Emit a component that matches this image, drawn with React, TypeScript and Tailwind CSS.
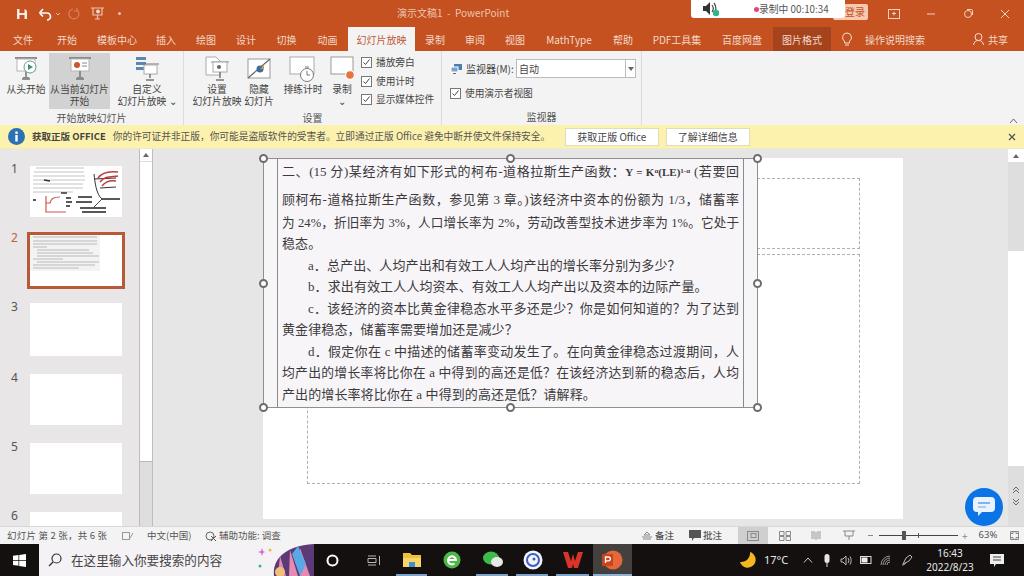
import React from "react";

const sansFont = "font-['Noto_Sans_CJK_SC','Noto_Sans',sans-serif]";

const tabs = [
  { t: "文件", c: "w-[46px]" },
  { t: "开始", c: "w-[42px]" },
  { t: "模板中心", c: "w-[58px]" },
  { t: "插入", c: "w-[40px]" },
  { t: "绘图", c: "w-[40px]" },
  { t: "设计", c: "w-[40px]" },
  { t: "切换", c: "w-[41px]" },
  { t: "动画", c: "w-[41px]" },
  { t: "幻灯片放映", c: "w-[67px] bg-[#f3f3f3] !text-[#c05a35]" },
  { t: "录制", c: "w-[40px]" },
  { t: "审阅", c: "w-[40px]" },
  { t: "视图", c: "w-[40px]" },
  { t: "MathType", c: "w-[68px]" },
  { t: "帮助", c: "w-[40px]" },
  { t: "PDF工具集", c: "w-[68px]" },
  { t: "百度网盘", c: "w-[62px]" },
  { t: "图片格式", c: "w-[58px] bg-[#a5431c]" },
];

function Screen({ children, bg = "#fff" }: { children?: React.ReactNode; bg?: string }) {
  return (
    <svg width="26" height="26" viewBox="0 0 26 26" fill="none">
      <rect x="2" y="1" width="22" height="2" fill="#8a8a8a" />
      <rect x="4" y="3" width="18" height="12" fill={bg} stroke="#b5b5b5" />
      <path d="M13 15v6M9 23h8" stroke="#777" strokeWidth="1.5" />
      <path d="M10 21h6l1 2H9z" fill="#8a8a8a" />
      {children}
    </svg>
  );
}

function RibbonBtn({ w, icon, lines, active }: { w: string; icon: React.ReactNode; lines: string[]; active?: boolean }) {
  return (
    <div className={`flex flex-col items-center h-[56px] shrink-0 ${w} ${active ? "bg-[#d2d2d2]" : ""}`}>
      <div className="h-[30px] flex items-start pt-[3px] justify-center">{icon}</div>
      {lines.map((l) => (
        <div key={l} className="text-[9.8px] leading-[12px] whitespace-nowrap text-[#444]">{l}</div>
      ))}
    </div>
  );
}

function Check({ label }: { label: string }) {
  return (
    <div className="flex items-center h-[19px] gap-[3px] whitespace-nowrap">
      <span className="w-[11px] h-[11px] border border-[#777] bg-white flex items-center justify-center">
        <svg width="9" height="9" viewBox="0 0 9 9" fill="none"><path d="M1.5 4.5l2 2 4-5" stroke="#444" strokeWidth="1" /></svg>
      </span>
      <span className="text-[9.7px] text-[#444] ml-[1px]">{label}</span>
    </div>
  );
}

function Group({ w, label, children }: { w: string; label: string; children: React.ReactNode }) {
  return (
    <div className={`${w} shrink-0 h-full border-r border-[#dcdcdc] flex flex-col`}>
      <div className="h-[58px] pt-[2px] flex">{children}</div>
      <div className="flex-1 pt-[1px] text-center text-[10px] leading-[16px] text-[#555]">{label}</div>
    </div>
  );
}

function Handle({ cls }: { cls: string }) {
  return <span className={`absolute w-[9px] h-[9px] rounded-full border-[2px] border-[#6d6d6d] bg-white ${cls}`} />;
}

function Line({ children, just = true, indent = false, h = "h-[21.5px]", size = "text-[13px]" }: { children: React.ReactNode; just?: boolean; indent?: boolean; h?: string; size?: string }) {
  return (
    <div className={`${h} flex items-center ${indent ? "pl-[26px]" : ""}`}>
      <div className={`w-full ${size} leading-[20px] text-[#3c3a3c] ${just ? "text-justify [text-align-last:justify] whitespace-nowrap" : "whitespace-nowrap tracking-[0.1px]"}`}>
        {children}
      </div>
    </div>
  );
}

function Thumb1() {
  return (
    <svg width="92" height="51" viewBox="0 0 92 51" className="block bg-white">
      <g stroke="#b5b5b5" strokeWidth="0.8">
        <path d="M6 2h48M4 6h50M3 10h52M3 14h52M3 18h50M3 22h50M3 26h40" />
      </g>
      <path d="M14 14l6 1M31 27h6" stroke="#333" strokeWidth="1.5" />
      <path d="M64 8c1 8 2 20 8 25M64 13l22-1M70 22l16-1" stroke="#333" strokeWidth="1" fill="none" />
      <path d="M68 12c4-6 12-7 20-6M70 16c5-6 10-5 18-6M72 20c3-4 8-6 14-5" stroke="#c23c3c" strokeWidth="1.5" fill="none" />
      <path d="M16 30v16h20M16 37h4c1-4 3-6 10-6" stroke="#c85a50" strokeWidth="1.2" fill="none" />
      <path d="M48 31h14M46 36h16M72 33h18M50 42h26M52 46h24M36 32h5M36 36h6M36 40h4M3 34h3" stroke="#222" strokeWidth="1.3" />
      <path d="M72 33l-8 8" stroke="#444" strokeWidth="1" />
    </svg>
  );
}

function Thumb2() {
  return (
    <svg width="92" height="51" viewBox="0 0 92 51" className="block bg-white">
      <rect x="0" y="0" width="70" height="36" fill="#f4f3f4" />
      <g stroke="#b3b3b3" strokeWidth="0.9">
        <path d="M3 2h64M3 6h64M3 9h64M3 12h14M7 15h52M7 18h56M7 21h62M3 24h30M7 27h62M3 30h62M3 33h46" />
      </g>
    </svg>
  );
}

function SideThumb({ n, gap, active, numCls, thumbH = "h-[51px]", children }: { n: number; gap: string; active?: boolean; numCls: string; thumbH?: string; children?: React.ReactNode }) {
  return (
    <div className={`flex shrink-0 ${gap}`}>
      <div className={`w-[27px] pr-[4px] text-center text-[12px] leading-[14px] font-['Noto_Sans'] ${numCls} ${active ? "text-[#c65f40]" : "text-[#555]"}`}>{n}</div>
      <div className={`${active ? "border-[3px] border-[#b85a38] -ml-[3px]" : ""} bg-white w-fit h-fit`}>
        <div className={`w-[92px] ${thumbH} bg-white`}>{children}</div>
      </div>
    </div>
  );
}

export default function App() {
  return (
    <div className={`relative w-[1024px] h-[576px] overflow-hidden flex flex-col bg-[#e6e6e6] ${sansFont}`}>
      {/* title bar */}
      <div className="h-[27px] bg-[#c4511f] flex items-center relative shrink-0">
        <div className="flex items-center pl-[15px]">
          <svg width="14" height="14" viewBox="0 0 14 14" fill="none">
            <path d="M2 2h8l2 2v8H2z" fill="#f7ebe4" />
            <rect x="4.5" y="2" width="5" height="4" fill="#c4511f" />
            <rect x="4.5" y="8" width="5" height="4" fill="#c4511f" />
          </svg>
          <svg className="ml-[9px]" width="14" height="14" viewBox="0 0 14 14" fill="none">
            <path d="M3 6h6a3.5 3.5 0 010 7M1.500 6l3.500-4M1.500 6l3.500 3.500" stroke="#fff" strokeWidth="1.7" />
          </svg>
          <svg className="ml-[2px]" width="8" height="8" viewBox="0 0 8 8" fill="none"><path d="M2 3l2 2 2-2" stroke="#e7b9a5" /></svg>
          <svg className="ml-[5px]" width="14" height="14" viewBox="0 0 14 14" fill="none">
            <path d="M10 3a5 5 0 11-4-1M10 1v3H7" stroke="#d9835f" strokeWidth="1.2" />
          </svg>
          <svg className="ml-[9px]" width="15" height="15" viewBox="0 0 15 15" fill="none">
            <path d="M1 2h13M3 2v7h9V2M7.500 9v4M5 13h5" stroke="#ecc4b2" strokeWidth="1.2" />
            <circle cx="8" cy="5.500" r="2" fill="#f1d8cb" />
          </svg>
          <span className="ml-[13px] w-[3px] h-[3px] rounded-full bg-[#ecc4b2]" />
        </div>
        <div className="absolute left-[397px] top-[5px] text-[10px] leading-[16px] text-[#edc5b2] whitespace-nowrap">演示文稿1 &nbsp;- &nbsp;PowerPoint</div>
        <div className="ml-auto flex items-center pr-[13px] gap-[25px]">
          <svg width="12" height="10" viewBox="0 0 12 10" fill="none"><rect x="0.500" y="0.500" width="11" height="9" stroke="#f2d2c2" /><path d="M6 2.500v4M4 4.500h4" stroke="#f2d2c2" /></svg>
          <svg width="12" height="10" viewBox="0 0 12 10" fill="none"><path d="M2 5h8" stroke="#f2d2c2" /></svg>
          <svg width="12" height="12" viewBox="0 0 12 12" fill="none"><circle cx="6" cy="6" r="3.500" stroke="#f2d2c2" /><path d="M5 1.500h4.500a1 1 0 011 1V7" stroke="#f2d2c2" /></svg>
          <svg width="12" height="12" viewBox="0 0 12 12" fill="none"><path d="M2 2l8 8M10 2l-8 8" stroke="#f2d2c2" /></svg>
        </div>
      </div>
      {/* tabs */}
      <div className="h-[24px] bg-[#c4511f] flex shrink-0 relative text-[#f3d9cc]">
        {tabs.map((x) => (
          <div key={x.t} className={`${x.c} h-full flex items-center justify-center text-[10px] whitespace-nowrap`}>{x.t}</div>
        ))}
        <div className="ml-[10px] flex items-center gap-[12px]">
          <svg width="12" height="15" viewBox="0 0 12 15" fill="none"><path d="M6 1a4.500 4.500 0 00-2.500 8.200V11h5V9.200A4.500 4.500 0 006 1zM4 13h4" stroke="#f5e0d6" /></svg>
          <span className="text-[10px] whitespace-nowrap">操作说明搜索</span>
        </div>
        <div className="ml-auto mr-[16px] flex items-center gap-[3px]">
          <svg width="13" height="14" viewBox="0 0 13 14" fill="none"><circle cx="6.500" cy="5" r="3.500" stroke="#f5e0d6" /><path d="M1.500 13c.5-3 2-4.500 5-4.500s4.500 1.500 5 4.500" stroke="#f5e0d6" /></svg>
          <span className="text-[10px]">共享</span>
        </div>
      </div>
      {/* ribbon */}
      <div className="h-[74px] bg-[#f3f3f3] flex shrink-0 relative">
        <Group w="w-[184px]" label="开始放映幻灯片">
          <div className="w-[3px]" />
          <RibbonBtn w="w-[46px]" lines={["从头开始"]} icon={
            <Screen><circle cx="17" cy="11" r="6" fill="#fff" stroke="#6a9a94" /><path d="M15 8l5 3-5 3z" fill="#4c8a80" /></Screen>} />
          <RibbonBtn w="w-[61px]" active lines={["从当前幻灯片", "开始"]} icon={
            <Screen><circle cx="10" cy="9" r="3" fill="#c8572e" /><path d="M15 7h5M15 10h5" stroke="#888" /></Screen>} />
          <div className="w-[11px]" />
          <RibbonBtn w="w-[52px]" lines={["自定义", "幻灯片放映 ⌄"]} icon={
            <svg width="26" height="26" viewBox="0 0 26 26" fill="none">
              <rect x="2" y="1" width="10" height="3" fill="#5b87b0" /><rect x="2" y="6" width="10" height="3" fill="#5b87b0" /><rect x="2" y="11" width="10" height="3" fill="#5b87b0" />
              <path d="M8 8h17" stroke="#777" /><rect x="10" y="9" width="13" height="9" fill="#fff" stroke="#aaa" /><path d="M16 18v4M12 24h8" stroke="#777" strokeWidth="1.500" />
            </svg>} />
        </Group>
        <Group w="w-[258px]" label="设置">
          <div className="w-[9px]" />
          <RibbonBtn w="w-[48px]" lines={["设置", "幻灯片放映"]} icon={
            <svg width="26" height="26" viewBox="0 0 26 26" fill="none">
              <path d="M2 1h10l4 4v14H2z" fill="#fff" stroke="#aaa" /><path d="M7 6h18" stroke="#888" /><rect x="9" y="6" width="14" height="10" fill="#fff" stroke="#aaa" /><circle cx="15" cy="11" r="2" fill="#666" /><path d="M16 16v6M12 24h8" stroke="#777" strokeWidth="1.500" />
            </svg>} />
          <RibbonBtn w="w-[36px]" lines={["隐藏", "幻灯片"]} icon={
            <svg width="26" height="26" viewBox="0 0 26 26" fill="none">
              <rect x="2" y="3" width="22" height="19" fill="#fff" stroke="#999" /><path d="M2 22L24 3" stroke="#666" strokeWidth="1.200" /><circle cx="14" cy="13" r="3.500" fill="#3f6c9c" /><path d="M14 13l4 0 0-4" fill="#c9a227" />
            </svg>} />
          <RibbonBtn w="w-[52px]" lines={["排练计时"]} icon={
            <svg width="28" height="28" viewBox="0 0 28 28" fill="none">
              <rect x="1" y="1" width="24" height="17" fill="#fff" stroke="#aaa" /><circle cx="18" cy="19" r="6.500" fill="#fff" stroke="#777" /><path d="M18 15v4h3M16 11h4" stroke="#777" />
            </svg>} />
          <RibbonBtn w="w-[26px]" lines={["录制", "⌄"]} icon={
            <svg width="26" height="26" viewBox="0 0 26 26" fill="none">
              <rect x="2" y="1" width="22" height="17" fill="#fff" stroke="#999" /><circle cx="21" cy="19" r="5" fill="#fff" /><circle cx="21" cy="19" r="3.800" fill="#e8743a" />
            </svg>} />
          <div className="pl-[6px] flex flex-col">
            <Check label="播放旁白" />
            <Check label="使用计时" />
            <Check label="显示媒体控件" />
          </div>
        </Group>
        <Group w="w-[200px]" label="监视器">
          <div className="pl-[8px] pt-[6px] flex flex-col">
            <div className="flex items-center h-[19px]">
              <svg width="13" height="12" viewBox="0 0 13 12" fill="none"><rect x="4" y="1" width="8" height="6" fill="#4a7fb5" /><rect x="1" y="4" width="7" height="5" fill="#7aa3c9" stroke="#fff" /><path d="M3 10.500h3" stroke="#666" /></svg>
              <span className="text-[10px] text-[#444] ml-[3px] w-[50px] whitespace-nowrap">监视器(M):</span>
              <div className="w-[120px] h-[19px] bg-white border border-[#bbb] flex items-center pl-[2px] text-[10px] text-[#444]">
                <span className="flex-1">自动</span>
                <span className="w-[10px] h-full border-l border-[#bbb] flex items-center justify-center">
                  <svg width="6" height="4" viewBox="0 0 6 4"><path d="M0 0h6L3 4z" fill="#666" /></svg>
                </span>
              </div>
            </div>
            <div className="mt-[6px]"><Check label="使用演示者视图" /></div>
          </div>
        </Group>
        <svg className="absolute right-[6px] bottom-[1px]" width="9" height="6" viewBox="0 0 9 6" fill="none"><path d="M1 5l3.500-4L8 5" stroke="#666" /></svg>
      </div>
      {/* notice */}
      <div className="h-[24px] bg-[#fdf2ad] flex items-center shrink-0 relative border-b border-[#f3eac0]">
        <svg className="ml-[8px]" width="17" height="17" viewBox="0 0 17 17"><circle cx="8.500" cy="8.500" r="8.500" fill="#2b72b5" /><rect x="7.300" y="7" width="2.400" height="6.500" fill="#fff" /><rect x="7.300" y="3.500" width="2.400" height="2.400" fill="#fff" /></svg>
        <span className="ml-[7px] text-[9.5px] font-bold text-[#444] whitespace-nowrap">获取正版 OFFICE</span>
        <span className="ml-[7px] w-[452px] text-[9.7px] text-[#555] whitespace-nowrap">你的许可证并非正版，你可能是盗版软件的受害者。立即通过正版 Office 避免中断并使文件保持安全。</span>
        <div className="w-[94px] h-[18px] bg-white border border-[#e0dcc0] flex items-center justify-center text-[10px] text-[#444]">获取正版 Office</div>
        <div className="ml-[7px] w-[84px] h-[18px] bg-white border border-[#e0dcc0] flex items-center justify-center text-[10px] text-[#444]">了解详细信息</div>
        <svg className="ml-auto mr-[8px]" width="8" height="8" viewBox="0 0 8 8" fill="none"><path d="M1 1l6 6M7 1L1 7" stroke="#555" strokeWidth="1.300" /></svg>
      </div>
      {/* main */}
      <div className="flex-1 min-h-0 flex bg-[#e6e6e6] border-b border-[#d8d8d8]">
        <div className="w-[139px] shrink-0 overflow-hidden pl-[3px] pt-[11px] flex flex-col bg-[#e8e6e6]">
          <SideThumb n={1} numCls="-mt-[4px]" gap="pt-[6px] pb-[15px]"><Thumb1 /></SideThumb>
          <SideThumb n={2} numCls="-mt-[1px]" active gap="pb-[14px]"><Thumb2 /></SideThumb>
          <SideThumb n={3} numCls="-mt-[3px]" thumbH="h-[53px]" gap="pb-[18px]" />
          <SideThumb n={4} numCls="-mt-[3px]" gap="pb-[18px]" />
          <SideThumb n={5} numCls="-mt-[3px]" gap="pb-[18px]" />
          <SideThumb n={6} numCls="-mt-[3px]" gap="" />
        </div>
        <div className="w-[14px] shrink-0 flex flex-col border-x border-[#bdbdbd] bg-[#dedede]">
          <div className="h-[13px] bg-white flex items-center justify-center border-b border-[#ddd]">
            <svg width="6" height="4" viewBox="0 0 6 4"><path d="M0 4h6L3 0z" fill="#666" /></svg>
          </div>
          <div className="h-[300px] bg-white border-b border-[#bbb]" />
        </div>
        <div className="flex-1 min-w-0 pl-[110px] pt-[9px] relative">
          <div className="relative w-[640px] h-[361px] bg-white pt-[20px] pl-[44px]">
            <div className="w-[553px] h-[71px] border border-dashed border-[#b0b0b0]" />
            <div className="mt-[5px] w-[553px] h-[230px] border border-dashed border-[#b0b0b0]" />
            {/* selected picture */}
            <div className="absolute left-0 top-0 w-[495px] h-[250px] border border-[#8f8f8f] bg-[#f6f5f7] pl-[13px] pr-[13px]">
              <div className="h-full border-x border-[#8a8a8a] bg-[#f7f5f8] px-[4px] font-['Liberation_Serif','Noto_Sans_CJK_SC',serif]">
                <Line h="h-[26px]">二、(15 分)某经济有如下形式的柯布-道格拉斯生产函数：<b className="text-[11px]">Y = K<sup className="text-[7px]">α</sup>(LE)<sup className="text-[7px]">1-α</sup></b> (若要回</Line>
                <Line h="mt-[3px] h-[24px]">顾柯布-道格拉斯生产函数，参见第 3 章。)该经济中资本的份额为 1/3，储蓄率</Line>
                <Line size="text-[12.6px]">为 24%，折旧率为 3%，人口增长率为 2%，劳动改善型技术进步率为 1%。它处于</Line>
                <Line just={false}>稳态。</Line>
                <Line just={false} indent>a．总产出、人均产出和有效工人人均产出的增长率分别为多少？</Line>
                <Line just={false} indent>b．求出有效工人人均资本、有效工人人均产出以及资本的边际产量。</Line>
                <Line indent>c．该经济的资本比黄金律稳态水平多还是少？你是如何知道的？为了达到</Line>
                <Line just={false}>黄金律稳态，储蓄率需要增加还是减少？</Line>
                <Line indent>d．假定你在 c 中描述的储蓄率变动发生了。在向黄金律稳态过渡期间，人</Line>
                <Line size="text-[12.8px]">均产出的增长率将比你在 a 中得到的高还是低？在该经济达到新的稳态后，人均</Line>
                <Line just={false}>产出的增长率将比你在 a 中得到的高还是低？请解释。</Line>
              </div>
              <Handle cls="-left-[5px] -top-[5px]" />
              <Handle cls="left-[242px] -top-[5px]" />
              <Handle cls="-right-[5px] -top-[5px]" />
              <Handle cls="-left-[5px] top-[120px]" />
              <Handle cls="-right-[5px] top-[120px]" />
              <Handle cls="-left-[5px] -bottom-[5px]" />
              <Handle cls="left-[242px] -bottom-[5px]" />
              <Handle cls="-right-[5px] -bottom-[5px]" />
            </div>
          </div>
        </div>
        <div className="w-[16px] shrink-0 flex flex-col bg-[#dedede]">
          <div className="h-[13px] bg-white flex items-center justify-center">
            <svg width="6" height="4" viewBox="0 0 6 4"><path d="M0 4h6L3 0z" fill="#666" /></svg>
          </div>
          <div className="h-[89px]" />
          <div className="h-[215px] bg-white" />
          <div className="mt-auto pb-[20px] flex flex-col items-center gap-[4px]">
            <svg width="8" height="8" viewBox="0 0 8 8" fill="none"><path d="M1 4l3-3 3 3M1 7l3-3 3 3" stroke="#666" /></svg>
            <svg width="8" height="8" viewBox="0 0 8 8" fill="none"><path d="M1 1l3 3 3-3M1 4l3 3 3-3" stroke="#666" /></svg>
          </div>
        </div>
      </div>
      {/* status */}
      <div className="h-[17px] bg-[#f3f3f3] flex items-center shrink-0 text-[9.5px] text-[#555] whitespace-nowrap">
        <span className="ml-[7px] w-[101px] tracking-[0.2px]">幻灯片 第 2 张，共 6 张</span>
        <svg className="ml-[14px]" width="12" height="10" viewBox="0 0 12 10" fill="none"><rect x="0.500" y="1.500" width="7" height="7" stroke="#999" /><path d="M8 7l3-5" stroke="#999" /></svg>
        <span className="ml-[13px] w-[44px]">中文(中国)</span>
        <svg className="ml-[14px]" width="12" height="12" viewBox="0 0 12 12" fill="none"><circle cx="5" cy="6" r="4" stroke="#666" /><path d="M6 6l5 5M11 6l-5 5" stroke="#555" /></svg>
        <span className="ml-[2px] w-[63px]">辅助功能: 调查</span>
        <svg className="ml-[360px]" width="10" height="9" viewBox="0 0 10 9" fill="none"><path d="M5 1l3 3H2zM0 6h10M1 8h8" stroke="#888" /></svg>
        <span className="ml-[3px] w-[19px] font-medium">备注</span>
        <svg className="ml-[15px]" width="12" height="11" viewBox="0 0 12 11"><path d="M0 0h12v8H5L3 11V8H0z" fill="#555" /></svg>
        <span className="ml-[2px] w-[19px] font-medium">批注</span>
        <div className="ml-[16px] w-[30px] h-full bg-[#cfcfcf] flex items-center justify-center">
          <svg width="12" height="10" viewBox="0 0 12 10" fill="none"><rect x="0.500" y="0.500" width="11" height="9" stroke="#888" /><rect x="4" y="2.500" width="5" height="4" stroke="#888" /></svg>
        </div>
        <svg className="ml-[11px]" width="12" height="10" viewBox="0 0 12 10" fill="none"><path d="M.5.500h4.500v4H.5zM7 .5h4.500v4H7zM.5 5.500h4.500v4H.5zM7 5.500h4.500v4H7z" stroke="#888" /></svg>
        <svg className="ml-[19px]" width="12" height="10" viewBox="0 0 12 10" fill="none"><path d="M6 1v8M1 1h4M1 3h4M1 5h4M1 7h4M7 1h4M7 3h4M7 5h4M7 7h4" stroke="#999" /></svg>
        <svg className="ml-[21px]" width="12" height="11" viewBox="0 0 12 11" fill="none"><path d="M0 1h12M2 1v5h8V1M6 6v4" stroke="#888" /></svg>
        <span className="ml-[13px] w-[5px] h-[1px] bg-[#888]" />
        <div className="relative ml-[6px] w-[79px] h-[1px] bg-[#444]">
          <span className="absolute left-[23px] -top-[4px] w-[4px] h-[9px] bg-[#555]" />
          <span className="absolute left-[39px] -top-[2px] w-[1px] h-[5px] bg-[#555]" />
        </div>
        <span className="ml-[4px] text-[#888] text-[10px]">+</span>
        <span className="ml-[11px] w-[20px] text-[9.500px] font-['Noto_Sans']">63%</span>
        <svg className="ml-[11px]" width="9" height="9" viewBox="0 0 9 9" fill="none"><path d="M.5.5h8v8h-8zM3 .5v2H.5M6 .5v2h2.500M3 8.500v-2H.5M6 8.500v-2h2.500" stroke="#888" /></svg>
      </div>
      {/* taskbar */}
      <div className="h-[32px] bg-[#14100f] flex items-stretch shrink-0 relative">
        <div className="w-[39px] flex items-center justify-center">
          <svg width="13" height="13" viewBox="0 0 13 13" fill="#fff"><path d="M0 1.800l5.500-.8v5H0zM6.200.9L13 0v6H6.200zM0 6.800h5.500v5L0 11zM6.200 6.800H13V13l-6.800-1z" /></svg>
        </div>
        <div className="w-[275px] bg-[#f4f2f4] flex items-center relative overflow-hidden">
          <svg className="ml-[9px]" width="14" height="14" viewBox="0 0 14 14" fill="none"><circle cx="8.500" cy="5.500" r="4.500" stroke="#333" strokeWidth="1.200" /><path d="M5 9l-4 4" stroke="#333" strokeWidth="1.200" /></svg>
          <span className="ml-[9px] text-[12.6px] text-[#444] whitespace-nowrap">在这里输入你要搜索的内容</span>
          <svg className="absolute right-0 top-0" width="58" height="32" viewBox="0 0 58 32">
            <path d="M18 32C16 16 28 2 58 0V32z" fill="#5c3a78" />
            <path d="M24 12l6 20h-8zM34 6l8 26h-9zM44 4l10 28H44z" fill="#e58ab0" />
            <path d="M36 10l6-8 8 18-6 12z" fill="#5aa9e6" />
            <circle cx="24" cy="28" r="5" fill="#eec07a" />
            <path d="M2 8l3-1 1-3 1 3 2 1-2 1-1 3-1-3z" fill="#d66ad6" />
            <circle cx="14" cy="6" r="1.500" fill="#e9b949" /><circle cx="4" cy="22" r="1.500" fill="#39b58a" />
          </svg>
        </div>
        <div className="flex items-center">
          <svg className="ml-[12px]" width="13" height="13" viewBox="0 0 13 13" fill="none"><circle cx="6.500" cy="6.500" r="5" stroke="#fff" strokeWidth="2" /></svg>
          <svg className="ml-[28px]" width="14" height="13" viewBox="0 0 14 13" fill="none"><path d="M1 2h8M1 11h8M1 4.500h8v4H1zM12.500 2v9" stroke="#b8b8b8" /></svg>
          <svg className="ml-[22px]" width="18" height="16" viewBox="0 0 18 16"><path d="M0 1h7l2 2h9v12H0z" fill="#f2bf3d" /><rect x="0" y="6" width="18" height="9" fill="#f8d568" /><rect x="6" y="10" width="6" height="5" fill="#3f8fd2" /></svg>
          <svg className="ml-[22px]" width="18" height="18" viewBox="0 0 18 18"><circle cx="9" cy="9" r="8.500" fill="#4cb848" /><path d="M4 9h9a4 4 0 10-1.500 3.500" stroke="#fff" strokeWidth="2" fill="none" /></svg>
          <svg className="ml-[22px]" width="20" height="18" viewBox="0 0 20 18"><ellipse cx="8" cy="7" rx="8" ry="6.500" fill="#3dbb4b" /><ellipse cx="14" cy="11" rx="6" ry="5" fill="#e8e8e8" /></svg>
          <svg className="ml-[20px]" width="20" height="20" viewBox="0 0 20 20"><circle cx="10" cy="10" r="9.500" fill="#f4f6fb" /><circle cx="10" cy="10" r="6" fill="none" stroke="#3b5fc4" strokeWidth="2" /><circle cx="11" cy="9" r="1.500" fill="#3b5fc4" /></svg>
          <svg className="ml-[20px]" width="20" height="16" viewBox="0 0 20 16"><path d="M0 0h5l3 9 2-7 2 7 3-9h5l-5 16h-4l-1-4-1 4H5z" fill="#d8342a" /></svg>
          <div className="ml-[10px] w-[39px] h-[32px] bg-[#44403e] flex items-center justify-center">
            <svg width="21" height="20" viewBox="0 0 21 20"><circle cx="11" cy="10" r="9.500" fill="#e5673a" /><rect x="0" y="4" width="11" height="12" rx="1" fill="#c9441e" /><path d="M3.500 13V7h3a1.800 1.800 0 010 3.800H3.500" stroke="#fff" strokeWidth="1.300" fill="none" /></svg>
          </div>
        </div>
        <div className="ml-auto flex items-center text-[#e8e8e8]">
          <svg width="18" height="18" viewBox="0 0 18 18"><path d="M11 1a8 8 0 11-10 10 9 9 0 0010-10z" fill="#f4b81e" /></svg>
          <span className="ml-[7px] w-[25px] text-[11px] font-['Noto_Sans'] whitespace-nowrap">17°C</span>
          <svg className="ml-[14px]" width="10" height="6" viewBox="0 0 10 6" fill="none"><path d="M1 5.500l4-4.500 4 4.500" stroke="#ccc" /></svg>
          <svg className="ml-[10px]" width="8" height="13" viewBox="0 0 8 13"><rect x="1.500" y="0" width="5" height="9" rx="2.500" fill="#e6e6e6" /><path d="M4 9v4" stroke="#e6e6e6" /></svg>
          <svg className="ml-[9px]" width="12" height="11" viewBox="0 0 12 11" fill="none"><path d="M1 4h2l3-3v9L3 7H1zM8 3c1 1 1 4 0 5M10 1.500c1.500 2 1.500 6 0 8" stroke="#bbb" /></svg>
          <svg className="ml-[8px]" width="12" height="8" viewBox="0 0 12 8"><rect x=".5" y=".5" width="10.500" height="7" fill="none" stroke="#ddd" /><rect x="1.500" y="1.500" width="6" height="5" fill="#eee" /></svg>
          <svg className="ml-[8px]" width="12" height="11" viewBox="0 0 12 11" fill="none"><path d="M1 10a9 9 0 019-9M3 10a7 7 0 017-7M5 10a5 5 0 015-5M7 10a3 3 0 013-3" stroke="#999" /></svg>
          <svg className="ml-[9px]" width="12" height="12" viewBox="0 0 12 12" fill="none"><path d="M2 10l3-6 4-3 2 2-3 4zM1 11c2 0 3-1 4-2" stroke="#bbb" /></svg>
          <div className="ml-[12px] w-[50px] flex flex-col items-center text-[10px] leading-[14px] font-['Noto_Sans'] whitespace-nowrap">
            <span>16:43</span>
            <span>2022/8/23</span>
          </div>
          <svg className="ml-[15px] mr-[20px]" width="14" height="13" viewBox="0 0 14 13"><path d="M0 0h14v10H6l-2 3v-3H0z" fill="#eee" /><path d="M3 3h8M3 6h8" stroke="#444" /></svg>
        </div>
        <span className="absolute bottom-0 left-[396px] w-[31px] h-[2px] bg-[#7ea3c8]" />
        <span className="absolute bottom-0 left-[476px] w-[32px] h-[2px] bg-[#7ea3c8]" />
        <span className="absolute bottom-0 left-[516px] w-[32px] h-[2px] bg-[#7ea3c8]" />
        <span className="absolute bottom-0 left-[556px] w-[33px] h-[2px] bg-[#7ea3c8]" />
        <span className="absolute bottom-0 left-[593px] w-[39px] h-[2px] bg-[#8fb2d4]" />
      </div>
      {/* recorder overlay */}
      <div className="absolute left-[833px] top-[4px] w-[35px] h-[16px] rounded-[2px] bg-[#f7c9b0] text-[#c4511f] text-[10px] leading-[16px] pl-[12px]">登录</div>
      <div className="absolute left-[691px] top-0 w-[154px] h-[18px] bg-white rounded-b-[3px] flex items-center">
        <svg className="ml-[11px]" width="18" height="16" viewBox="0 0 18 16"><path d="M1 5h3l4-4v13L4 10H1z" fill="#333" /><path d="M10 4c1.500 2 1.500 5 0 7M12 2c2.500 3 2.500 8 0 11" stroke="#444" strokeWidth="1.200" fill="none" /><circle cx="14" cy="12" r="3.200" fill="#2eb88a" /></svg>
        <span className="ml-[34px] w-[5px] h-[5px] rounded-full bg-[#e8417f]" />
        <span className="ml-[0px] text-[9.800px] text-[#555] whitespace-nowrap">录制中 00:10:34</span>
      </div>
      {/* chat bubble */}
      <div className="absolute left-[965px] top-[488px] w-[38px] h-[38px] rounded-full bg-[#0a74e6] flex items-center justify-center">
        <svg width="24" height="22" viewBox="0 0 24 22"><path d="M5 1h14a4 4 0 014 4v7a4 4 0 01-4 4H10l-4 4v-4H5a4 4 0 01-4-4V5a4 4 0 014-4z" fill="#eaf3fd" /><path d="M6 7h12" stroke="#7db4ee" strokeWidth="2" /><path d="M6 11h8" stroke="#a9cdf3" strokeWidth="2" /></svg>
      </div>
    </div>
  );
}
